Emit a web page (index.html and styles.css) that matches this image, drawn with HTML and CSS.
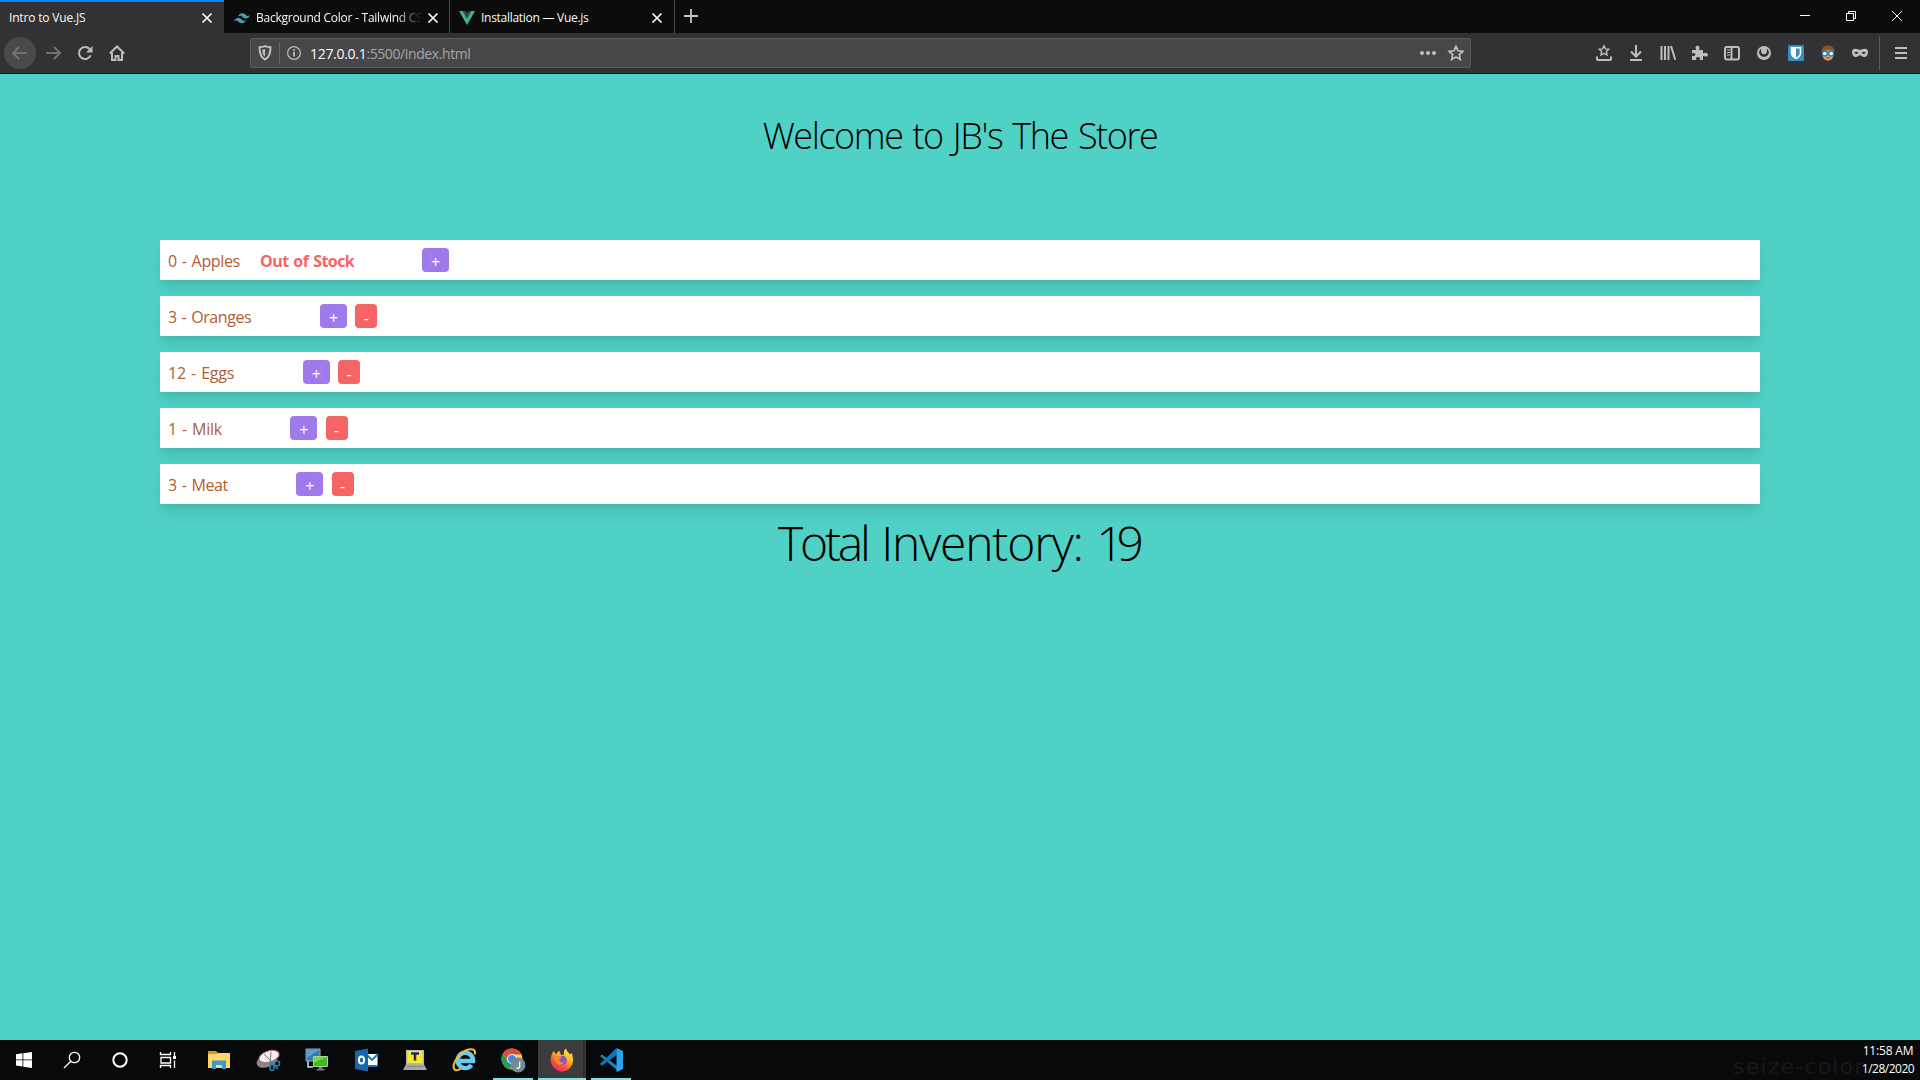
FILE: index.html
```html
<!DOCTYPE html>
<html lang="en">
<head>
<meta charset="utf-8">
<title>Intro to Vue.JS</title>
<link rel="stylesheet" href="styles.css">
</head>
<body>
<div class="screen">
  <header class="tabs">
    <div class="tab active"><span class="tab-title t-intro">Intro to Vue.JS</span>
      <svg class="close" viewBox="0 0 12 12"><path d="M1.5 1.5l9 9M10.5 1.5l-9 9"/></svg></div>
    <div class="tab"><svg class="fav" viewBox="0 0 16 16"><path fill="#4c9cab" d="M4 7c.6-2.500 2-3.700 4.200-3.700 3.300 0 3.500 2.300 5 2.700 1 .3 2-.1 2.800-1.200-.6 2.500-2 3.700-4.200 3.700-3.300 0-3.500-2.300-5-2.700C5.700 5.500 4.800 5.900 4 7zM0 11.700C.6 9.200 2 8 4.200 8c3.300 0 3.500 2.300 5 2.700 1 .3 2-.1 2.800-1.200-.6 2.500-2 3.700-4.200 3.700-3.300 0-3.500-2.300-5-2.700-1-.2-2 .1-2.800 1.200z"/></svg>
      <span class="tab-title t-tailwind">Background Color - Tailwind CS</span>
      <svg class="close" viewBox="0 0 12 12"><path d="M1.5 1.5l9 9M10.5 1.5l-9 9"/></svg></div>
    <div class="tab"><svg class="fav" viewBox="0 0 16 16"><path fill="#41b883" d="M0 1h4l4 6.500L12 1h4L8 15z"/><path fill="#35495e" d="M3.500 1h3L8 3.500 9.500 1h3L8 9z"/></svg>
      <span class="tab-title t-vue">Installation — Vue.js</span>
      <svg class="close" viewBox="0 0 12 12"><path d="M1.5 1.5l9 9M10.5 1.5l-9 9"/></svg></div>
    <svg class="new-tab" viewBox="0 0 14 14"><path d="M7 0v14M0 7h14"/></svg>
    <div class="window-buttons">
      <svg viewBox="0 0 10 10"><path d="M0 4.500h10"/></svg>
      <svg viewBox="0 0 10 10"><path d="M.5 2.500h7v7h-7zM2.500 2.500v-2h7v7h-2"/></svg>
      <svg viewBox="0 0 10 10"><path d="M0 0l10 10M10 0L0 10"/></svg>
    </div>
  </header>

  <nav class="toolbar">
    <div class="nav-buttons">
      <span class="nav back"><svg viewBox="0 0 16 16"><path d="M15 8H1.500M7 2L1 8l6 6"/></svg></span>
      <span class="nav forward"><svg viewBox="0 0 16 16"><path d="M1 8h13.500M9 2l6 6-6 6"/></svg></span>
      <span class="nav"><svg viewBox="0 0 16 16"><path d="M13.600 10.300A6 6 0 1 1 12.500 4"/><path class="solid" d="M15.500 1v6.500H9z"/></svg></span>
      <span class="nav"><svg viewBox="0 0 16 16"><path d="M.8 8.500L8 1.500l7.200 7M3 7.500V15h3.500v-4h3v4H13V7.500"/></svg></span>
    </div>
    <div class="urlbar">
      <svg class="shield" viewBox="0 0 14 16"><path d="M7 1.200c2 .9 4 1 5.500 1 0 6-1 10-5.500 12.300C2.500 12.200 1.500 8.200 1.500 2.200c1.500 0 3.500-.1 5.500-1z"/><path class="solid" d="M7 4c-1 .4-2 .7-2.700.7 0 3.300.7 5.500 2.700 7z"/></svg>
      <i class="url-sep"></i>
      <svg class="info" viewBox="0 0 16 16"><circle cx="8" cy="8" r="6.400"/><path class="thick" d="M8 7v4.500M8 4.200V6"/></svg>
      <span class="url"><b>127.0.0.1</b><span>:5500/index.html</span></span>
      <svg class="dots" viewBox="0 0 16 16"><circle cx="2" cy="8" r="2"/><circle cx="8" cy="8" r="2"/><circle cx="14" cy="8" r="2"/></svg>
      <svg class="star" viewBox="0 0 16 16"><path d="M8 1.300l2 4.500 4.900.5-3.600 3.300 1 4.900L8 12l-4.300 2.500 1-4.900L1.100 6.300 6 5.800z"/></svg>
    </div>
    <div class="extensions">
      <span><svg viewBox="0 0 16 16"><path class="saved" d="M8 .8l1.500 3.100 3.300.4-2.400 2.300.6 3.400L8 8.300 5 10l.6-3.400-2.400-2.300 3.300-.4z"/><path d="M1 11.500V14q0 1 1 1h12q1 0 1-1v-2.500"/></svg></span>
      <span><svg viewBox="0 0 16 16"><path d="M8 0v11M3 6.500l5 5 5-5M2 15h12"/></svg></span>
      <span><svg viewBox="0 0 16 16"><path d="M1.500 1v14M5 1v14M8.500 1v14M11 1l4.300 13.700"/></svg></span>
      <span><svg viewBox="0 0 16 16"><path class="solid" d="M0 5h4.300C2.800 2.800 3.700.8 5.500.8S8.200 2.800 6.900 5H11v3.500c2-1.400 5-.7 5 1.200s-3 2.500-5 1.100V15H7.700c1.200-2-.2-3-1.700-3s-2.700 1-1.600 3H0v-4.500c2 1.200 3.300.2 3.300-1S2 7.500 0 8.700z"/></svg></span>
      <span><svg viewBox="0 0 16 16"><rect x="1" y="2" width="14" height="12.500" rx="2"/><path d="M7.500 2v12.500"/><path class="thin" d="M3 5h3M3 7.500h3M3 10h3"/></svg></span>
      <span><svg viewBox="0 0 16 16"><path fill-rule="evenodd" class="solid" d="M8 1a7 7 0 1 1 0 14A7 7 0 0 1 8 1zM5.200 3.800C3.500 5 2.600 7 3.300 8.800 4.500 11.300 6.500 11.800 8 11.800s3.500-.5 4.700-3c.7-1.800-.2-3.800-1.900-5 .7 3.500-.3 5.500-2.800 5.500S4.500 7.300 5.200 3.800z"/></svg></span>
      <span><svg viewBox="0 0 16 16"><rect class="bw" width="16" height="16" rx="1.500"/><path class="white" d="M2.700 2h10.600v6c0 3-2.500 5-5.300 6.300C5.200 13 2.700 11 2.700 8z"/><path class="bw" d="M8 3.500h3.700V8c0 2-1.700 3.500-3.700 4.500z"/></svg></span>
      <span><svg viewBox="0 0 16 16"><ellipse cx="8" cy="8.500" rx="6" ry="7.200" fill="#e2a35c" stroke="none"/><path d="M1.500 7Q1.500.5 8 .5T14.500 7L12 5 6 5.500z" fill="#8f5711" stroke="none"/><circle cx="4.800" cy="8.500" r="2.500" fill="#dff" stroke="#1976d9" stroke-width="1.300"/><circle cx="11.200" cy="8.500" r="2.500" fill="#dff" stroke="#1976d9" stroke-width="1.300"/><path d="M6 13h4" stroke="#bf3c22" stroke-width="1.200"/></svg></span>
      <span><svg viewBox="0 0 16 16"><path fill-rule="evenodd" class="solid" d="M0 7c0-2.500 1-3.300 3.500-3.300C5.500 3.700 6.500 4.800 8 4.800s2.500-1.100 4.500-1.100C15 3.700 16 4.500 16 7c0 3-1.500 5-4 5-2 0-2.800-1.700-4-1.700S6 12 4 12c-2.500 0-4-2-4-5zm2.300.8c.8 1.500 3 1.500 4 .2-1-1.800-3.200-1.700-4-.2zm7.400.2c1 1.300 3.200 1.300 4-.2-.8-1.500-3-1.600-4 .2z"/></svg></span>
    </div>
    <i class="tool-sep"></i>
    <svg class="menu" viewBox="0 0 12 12"><path d="M0 1h12M0 6h12M0 11h12"/></svg>
  </nav>

  <main class="page">
    <h1>Welcome to JB's The Store</h1>
    <ul>
      <li><span class="item apples">0 - Apples</span><strong>Out of Stock</strong><button class="plus">+</button></li>
      <li><span class="item oranges">3 - Oranges</span><button class="plus">+</button><button class="minus">-</button></li>
      <li><span class="item eggs">12 - Eggs</span><button class="plus">+</button><button class="minus">-</button></li>
      <li><span class="item milk">1 - Milk</span><button class="plus">+</button><button class="minus">-</button></li>
      <li><span class="item meat">3 - Meat</span><button class="plus">+</button><button class="minus">-</button></li>
    </ul>
    <h2><span class="total">Total</span> <span class="inventory">Inventory:</span> <span class="count">19</span></h2>
  </main>

  <footer class="taskbar">
    <div class="system">
      <span><svg viewBox="0 0 24 24"><path fill="#fff" d="M4 6.200l6.500-.9v6.200H4zM11.300 5.200L20 4v7.500h-8.700zM4 12.300h6.500v6.200L4 17.600zM11.300 12.300H20V20l-8.700-1.300z"/></svg></span>
      <span><svg class="line" viewBox="0 0 24 24"><circle cx="14.500" cy="9.500" r="5.200"/><path d="M10.800 13.200L4 20"/></svg></span>
      <span><svg class="line" viewBox="0 0 24 24"><circle cx="12" cy="12" r="6.700" stroke-width="2"/></svg></span>
      <span><svg class="line" viewBox="0 0 24 24"><path d="M4.500 4v2.500h10V4M4.500 20v-2.500h10V20M5 9.500h9.500v5.500H5zM18.500 4v4M18.500 12.500V20"/><path d="M18.500 8v3" stroke-width="3"/></svg></span>
    </div>
    <div class="apps">
      <span><svg viewBox="0 0 24 24"><path fill="#d79a20" d="M1 3h8l2 2h11v5H1z"/><path fill="#ffd768" d="M1 6h9l1.500-1H23v15H1z"/><path fill="#3f98d0" d="M5 12.500h14V21h-4v-4H9v4H5z"/></svg></span>
      <span><svg viewBox="0 0 24 24"><ellipse cx="11" cy="12.500" rx="11" ry="6.500" transform="rotate(-22 11 12.500)" fill="#8b8789"/><ellipse cx="13" cy="8.500" rx="10.500" ry="5.600" transform="rotate(-18 13 8.500)" fill="#f4efef" stroke="#b86068"/><path d="M8 6l10 10M15 4l-1 13" stroke="#777" stroke-width="1"/><g fill="none" stroke="#2684ac" stroke-width="1.600"><circle cx="21" cy="15.500" r="2.500"/><ellipse cx="16" cy="19.500" rx="2" ry="3"/><path d="M14 14l8 7"/></g></svg></span>
      <span><svg viewBox="0 0 24 24"><path fill="#3478aa" stroke="#87aebf" d="M1 1h14v12H1z"/><path fill="#5a9fcf" d="M2 2h12L2 10z"/><path d="M3 13v6h5" fill="none" stroke="#bde4ed" stroke-width="1.500"/><path fill="#45b622" stroke="#a2d990" d="M8.500 8.500h14v10h-14z"/><path fill="#70d63e" d="M9 9h13L9 15z"/><path fill="#777" d="M13.500 19h4v2h2v1.500h-8V21h2z"/></svg></span>
      <span><svg viewBox="0 0 24 24"><path fill="#fff" d="M12 6h11.500v12H12z"/><path d="M12 6l6 6 6-6M23.500 18H13" fill="none" stroke="#1674bc" stroke-width="1.800"/><path fill="#1466ae" d="M1 3l13-2.500v23L1 21z"/><ellipse cx="7.500" cy="12" rx="2.600" ry="3.500" fill="none" stroke="#fff" stroke-width="2"/></svg></span>
      <span><svg viewBox="0 0 24 24"><path fill="#bbb8a9" d="M3 2h18v15H3z"/><path fill="#f5e929" d="M4.500 3h15v12h-15z"/><path d="M8 5.500h8M12 5v7.500" stroke="#292365" stroke-width="2.500"/><path fill="#aaa7a3" d="M3 16.500h18l3 5.500H0z"/><path stroke="#888" d="M4 18.500h16"/></svg></span>
      <span><svg viewBox="0 0 24 24"><path d="M19.500 17a7.700 7.700 0 1 1 1.500-4H8" fill="none" stroke="#6acbf2" stroke-width="4.400"/><path d="M3 22C-3 17 11-1 21 1.500c2.300.7 2.500 3 1.500 5M3 22c2 1 4 0 6-1.500" fill="none" stroke="#f1bd32" stroke-width="2"/></svg></span>
      <span class="open"><svg viewBox="0 0 24 24"><circle cx="11" cy="11" r="10.500" fill="#ffcd40"/><path fill="#dc4b3e" d="M2 5.500a10.500 10.500 0 0 1 18.500 1H11L6.500 13z"/><path fill="#249b59" d="M2 5.500L7 14l4 2-2 5.300A10.500 10.500 0 0 1 2 5.500z"/><circle cx="11" cy="11" r="5" fill="#fff"/><circle cx="11" cy="11" r="4" fill="#4386e5"/><circle cx="17" cy="17" r="7.500" fill="#738b95"/><path d="M18.700 13.500v5q0 2.200-3.200 1.500" fill="none" stroke="#fff" stroke-width="1.300"/></svg></span>
      <span class="open current"><svg viewBox="0 0 24 24"><defs><linearGradient id="fx" x1=".8" y1="0" x2=".2" y2="1"><stop stop-color="#fff04c"/><stop offset=".4" stop-color="#ffad26"/><stop offset=".7" stop-color="#ff4e36"/><stop offset="1" stop-color="#e62568"/></linearGradient></defs><path fill="url(#fx)" d="M2 6l1.200-3 3 3L9 2.500 11 7l3-.5c-.5-3 .5-5 2-6 .5 3 3 4 4 6l1.500-1.500C26 15 20 23.500 12 23.500S-2 15 2 6z"/><circle cx="12" cy="12.500" r="4.800" fill="#9050bd"/><path fill="#ff8c2a" d="M4 9c3-2 4 0 7-.5 1 1-.5 2-2 2.500 0 3 3 4 5 3-1 3-5 4-8 1z"/></svg></span>
      <span class="open"><svg viewBox="0 0 24 24"><path d="M1 8l2-1.500L18 18v4zM1 16l2 1.500L18 6V2z" fill="#1687cb"/><path fill="#29a3ec" d="M17.500 0L24 3v18l-6.500 3z"/><path fill="#087abd" d="M1 16L17.500 0v7L3 17.500z"/></svg></span>
    </div>
    <div class="watermark">seize-color</div>
    <div class="clock"><span class="time">11:58 AM</span><span class="date">1/28/2020</span></div>
  </footer>
</div>
</body>
</html>
```
FILE: styles.css
```css
* { box-sizing: border-box; }
body { margin: 0; font-family: "Open Sans", "Noto Sans", sans-serif; }
svg { display: block; flex: none; overflow: visible; }
.screen { width: 1920px; height: 1080px; display: flex; flex-direction: column; overflow: hidden; background: #4fd1c5; }

/* Tab strip */
.tabs { height: 33px; flex: none; display: flex; background: #0c0c0d; color: #f9f9fa; }
.tab { width: 225px; display: flex; align-items: center; padding: 2px 11px 0 9px; border-right: 1px solid #4a4a4c; font-size: 12px; line-height: 30px; }
.tab.active { width: 224px; margin-right: 1px; background: #323234; border-right: 0; border-top: 2px solid #0a84ff; padding-top: 0; }
.tab .fav { width: 16px; height: 16px; margin-right: 6px; }
.tab-title { flex: 1; white-space: nowrap; }
.t-intro { letter-spacing: -.18px; }
.t-tailwind { letter-spacing: -.25px; mask-image: linear-gradient(to right, #000 calc(100% - 26px), transparent 100%); }
.t-vue { letter-spacing: -.28px; }
.close { width: 12px; height: 12px; margin-left: 5px; fill: none; stroke: #f9f9fa; stroke-width: 1.7; }
.new-tab { width: 14px; height: 14px; margin: 9px 0 0 9px; stroke: #c5c5c7; stroke-width: 1.8; }
.window-buttons { margin-left: auto; display: flex; gap: 36px; padding: 11px 18px 0 0; }
.window-buttons svg { width: 10px; height: 10px; fill: none; stroke: #fff; stroke-width: 1; }

/* Navigation toolbar */
.toolbar { height: 41px; flex: none; display: flex; align-items: center; background: #323234; border-bottom: 1px solid #0c0c0d; }
.toolbar svg { fill: none; stroke: #bebec0; stroke-width: 2; }
.toolbar .solid { fill: #bebec0; stroke: none; }
.nav-buttons { width: 250px; display: flex; padding-left: 4px; }
.nav { width: 32px; height: 32px; display: grid; place-items: center; border-radius: 50%; }
.nav svg { width: 16px; height: 16px; }
.back { background: #4a4a4c; margin-right: 1px; }
.nav.back svg, .nav.forward svg { stroke: #727274; }
.urlbar { width: 1221px; height: 30px; display: flex; align-items: center; padding: 0 6px 0 7px; background: #474749; border: 1px solid #5a5a5c; border-radius: 2px; }
.shield { width: 14px; height: 16px; }
.url-sep { width: 1px; height: 22px; margin: 0 6px 0 7px; background: #656567; }
.info { width: 16px; height: 16px; }
.toolbar .info { stroke-width: 1.2; }
.thick { stroke-width: 1.8; }
.thin { stroke-width: 1; }
.saved { stroke-width: 1.4; }
.url { flex: 1; display: flex; margin-left: 8px; padding-top: 2px; font-size: 14px; line-height: 20px; color: #a5a5a7; }
.url b { font-weight: 400; color: #f9f9fa; letter-spacing: -.3px; }
.url span { letter-spacing: -.4px; }
.dots { width: 16px; height: 16px; margin-right: 12px; }
.toolbar .dots { fill: #bebec0; stroke: none; }
.star { width: 16px; height: 16px; }
.toolbar .star { stroke-width: 1.7; }
.extensions { display: flex; margin-left: 117px; }
.extensions span { width: 32px; display: grid; place-items: center; }
.extensions svg { width: 16px; height: 16px; }
.toolbar .bw { fill: #3c8dbc; stroke: none; }
.toolbar .white { fill: #fff; stroke: none; }
.tool-sep { width: 1px; height: 34px; margin: 0 15px 0 3px; background: #5a5a5c; }
.menu { width: 12px; height: 12px; }

/* Store page */
.page { flex: 1; }
h1, h2 { margin: 0; text-align: center; color: #000; font-weight: 300; }
h1 { padding-top: 35px; height: 166px; font-size: 36px; line-height: 54px; letter-spacing: -1.43px; word-spacing: 2.1px; }
h2 { padding-top: 3px; font-size: 48px; line-height: 72px; letter-spacing: 1px; }
.total { letter-spacing: -3.2px; }
.inventory { letter-spacing: -1.2px; }
.count { letter-spacing: -7px; margin-right: 5px; }
ul { list-style: none; margin: 0 160px; padding: 0; display: grid; gap: 16px; }
li { height: 40px; display: flex; align-items: center; padding: 0 8px; background: #fff; box-shadow: 0 10px 15px -3px rgba(0,0,0,.1), 0 4px 6px -2px rgba(0,0,0,.05); color: #b15d36; font-size: 16px; line-height: 24px; }
.item { white-space: nowrap; padding-top: 2px; word-spacing: 1.2px; }
.apples { width: 92px; letter-spacing: -.35px; }
.oranges { width: 152px; letter-spacing: -.44px; }
.eggs { width: 134.8px; letter-spacing: -.2px; }
.milk { width: 122.3px; letter-spacing: -.25px; }
.meat { width: 128.3px; letter-spacing: -.4px; }
strong { width: 162px; padding-top: 2px; color: #f56565; font-weight: 700; letter-spacing: -.55px; word-spacing: 1.2px; white-space: nowrap; }
button { height: 24px; padding: 4px 0 0; border: 0; border-radius: 4px; color: #fff; font: 16px/20px "Open Sans", "Noto Sans", sans-serif; }
.plus { width: 27px; background: #9f7aea; }
.minus { width: 22px; margin-left: 8.4px; background: #f56565; }

/* Windows taskbar */
.taskbar { height: 40px; flex: none; display: flex; background: #08090b; color: #fff; }
.system, .apps { display: flex; }
.system span { width: 48px; display: grid; place-items: center; }
.apps { padding-left: 2px; }
.apps span { width: 49px; display: grid; place-items: center; }
.system svg { width: 24px; height: 24px; }
.apps svg { width: 24px; height: 24px; }
.line { fill: none; stroke: #fff; stroke-width: 1.3; }
.open { background: linear-gradient(#8be0dc, #8be0dc) 5px 38px / 40px 2px no-repeat; }
.apps .current { background: linear-gradient(#8be0dc, #8be0dc) 1px 38px / 48px 2px no-repeat, linear-gradient(to right, #3c3c3e 45px, #222324 45px, #323335 46px) 1px 0 / 48px 38px no-repeat; }
.watermark { margin-left: auto; width: 123px; white-space: nowrap; color: #171719; font: 22px/54px "DejaVu Sans", sans-serif; letter-spacing: 1.2px; }
.clock { width: 64px; display: flex; flex-direction: column; align-items: center; padding-top: 2px; font-size: 12px; line-height: 18px; }
.time { letter-spacing: -.19px; }
.date { letter-spacing: -.49px; }
```
